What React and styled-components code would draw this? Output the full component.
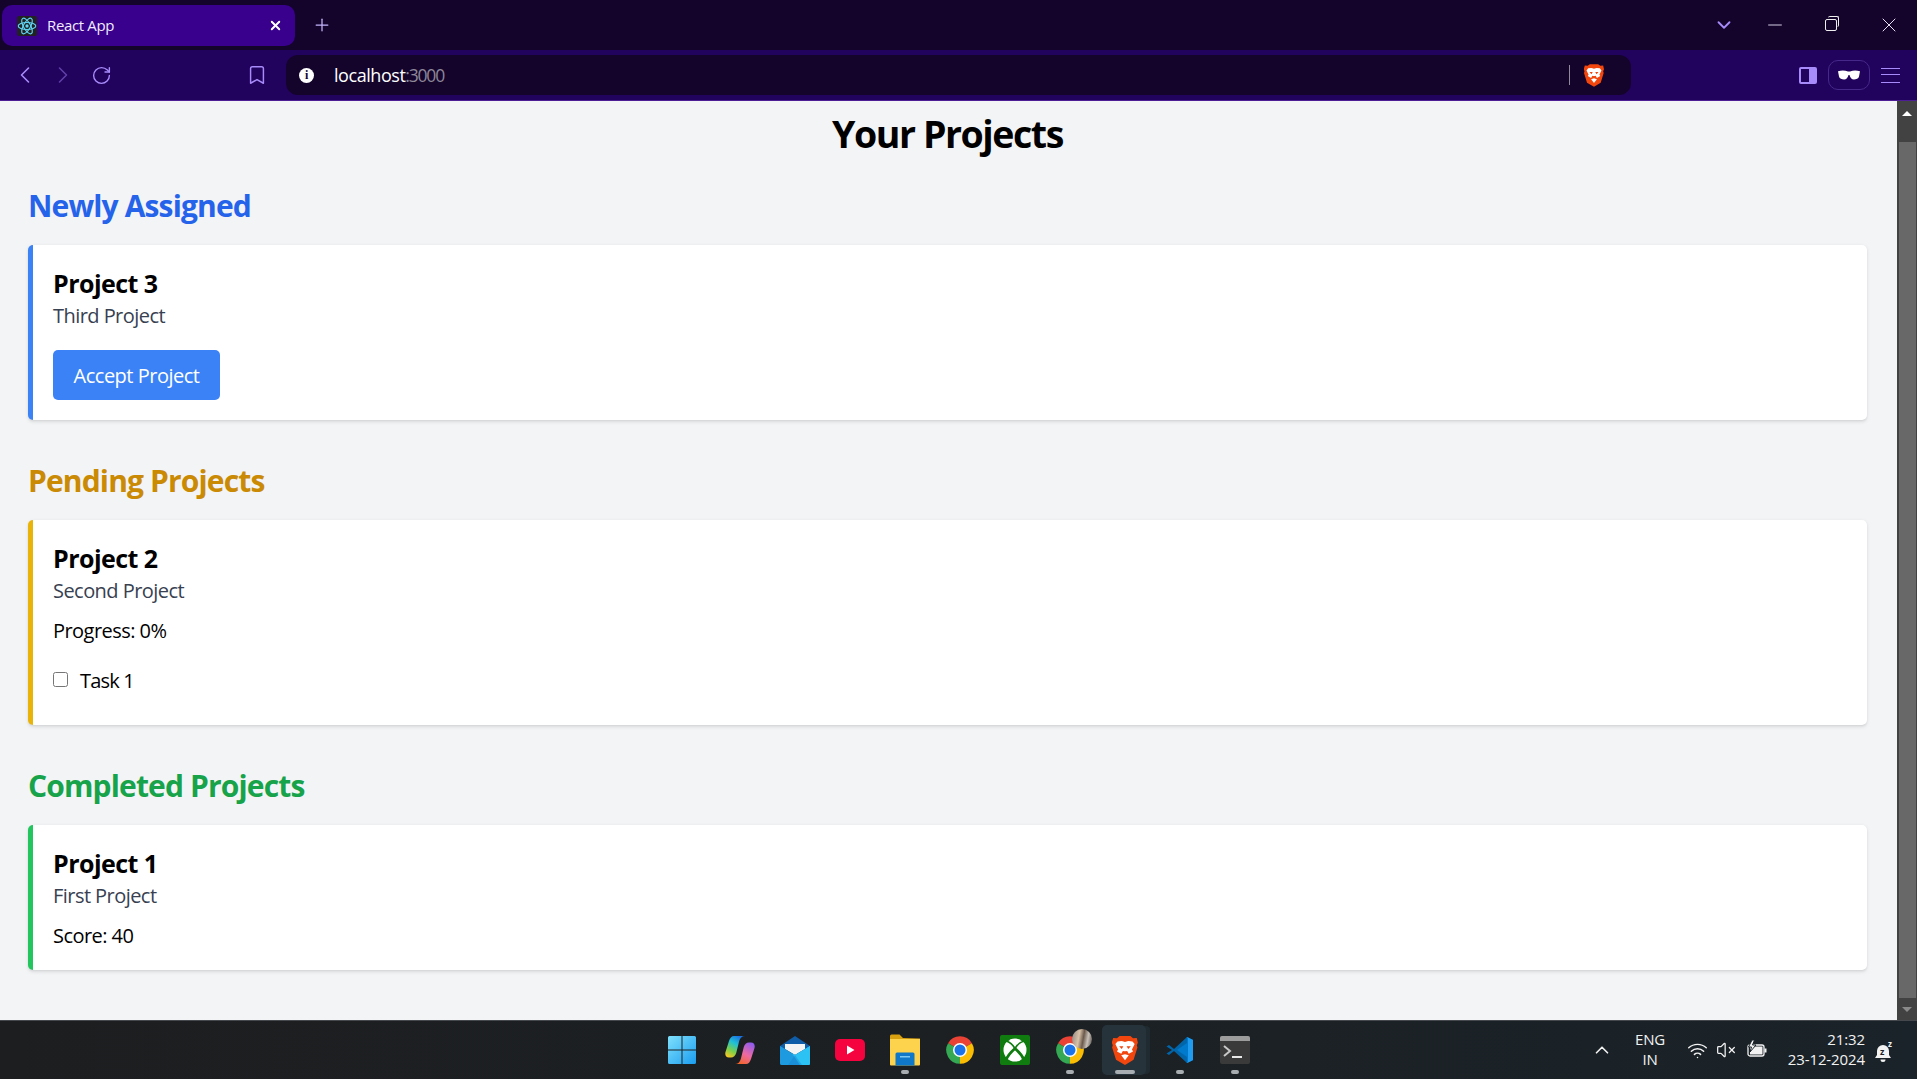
import React from "react";
import styled, { createGlobalStyle } from "styled-components";
import { ChevronLeft, ChevronRight, RotateCw, Bookmark, Plus, X, Minus, ChevronDown, ChevronUp, Wifi, VolumeX } from "lucide-react";

const uiFont = `"Open Sans", "Noto Sans", "Liberation Sans", sans-serif`;

const GlobalStyle = createGlobalStyle`
  html, body { margin: 0; padding: 0; height: 100%; overflow: hidden; }
  * { box-sizing: border-box; }
  body { font-family: ${uiFont}; background: #f3f4f6; }
`;

const Screen = styled.div`
  width: 100%;
  height: 100vh;
  display: flex;
  flex-direction: column;
  overflow: hidden;
`;

/* browser chrome */
const TabStrip = styled.div`
  height: 50px;
  flex: none;
  background: #14042b;
  display: flex;
  align-items: flex-start;
  padding: 5px 0 0 2px;
`;
const Tab = styled.div`
  width: 293px;
  height: 41px;
  background: #38008c;
  border-radius: 10px;
  display: flex;
  align-items: center;
  padding: 0 12px 0 15px;
  color: #f1eaff;
  font-size: 15px;
  letter-spacing: -0.35px;
`;
const Favicon = styled.span`
  width: 20px;
  height: 20px;
  background: #222;
  border-radius: 2px;
  display: flex;
  margin-right: 10px;
`;
const TabTitle = styled.span`
  flex: 1;
  line-height: 20px;
  padding-bottom: 2px;
`;
const StripButton = styled.span`
  width: ${p => p.$w || 40}px;
  height: 39px;
  margin-left: ${p => p.$ml || 0}px;
  display: flex;
  align-items: center;
  justify-content: center;
  color: ${p => p.$color || "#e6e0f5"};
`;
const Restore = styled.span`
  width: 12px;
  height: 12px;
  border: 1.2px solid #eee;
  border-radius: 2px;
  position: relative;
  background: #14042b;
  &::before {
    content: "";
    position: absolute;
    left: 2px;
    top: -4px;
    width: 10px;
    height: 10px;
    border-top: 1.2px solid #eee;
    border-right: 1.2px solid #eee;
    border-radius: 2px;
  }
`;
const Toolbar = styled.div`
  height: 51px;
  flex: none;
  background: #21025c;
  border-bottom: 1px solid #4c1d95;
  display: flex;
  align-items: center;
  padding-left: 6px;
`;
const NavButton = styled.span`
  width: 38px;
  height: 40px;
  margin-left: ${p => p.$ml || 0}px;
  display: flex;
  align-items: center;
  justify-content: center;
  color: ${p => (p.$dim ? "#5f3fa8" : "#a78bfa")};
`;
const UrlBar = styled.div`
  width: 1345px;
  height: 40px;
  margin-left: 10px;
  background: #14042b;
  border-radius: 12px;
  display: flex;
  align-items: center;
  padding-left: 13px;
  font-size: 18px;
  letter-spacing: -0.45px;
`;
const InfoDot = styled.span`
  width: 15px;
  height: 15px;
  border-radius: 50%;
  background: #fff;
  color: #14042b;
  font: bold 12px/15px "Liberation Serif", serif;
  text-align: center;
  margin-right: 20px;
`;
const Host = styled.span`
  color: #fff;
`;
const Port = styled.span`
  color: #8d8799;
  flex: 1;
  font-size: 17.5px;
  letter-spacing: -1.2px;
`;
const UrlDivider = styled.span`
  width: 1px;
  height: 20px;
  background: #8f8a9a;
  margin-right: 14px;
`;
const ShieldSlot = styled.span`
  display: flex;
  margin-right: 27px;
`;
const SidePanelIcon = styled.span`
  width: 18px;
  height: 17px;
  margin-left: 168px;
  border: 2px solid #a78bfa;
  border-radius: 2px;
  display: flex;
  justify-content: flex-end;
  &::after {
    content: "";
    width: 6px;
    background: #a78bfa;
  }
`;
const PrivatePill = styled.span`
  width: 42px;
  height: 30px;
  margin-left: 11px;
  border: 1px solid #45288a;
  border-radius: 10px;
  display: flex;
  align-items: center;
  justify-content: center;
`;
const Burger = styled.span`
  width: 19px;
  height: 15px;
  margin-left: 11px;
  border-top: 1.5px solid #a78bfa;
  border-bottom: 1.5px solid #a78bfa;
  position: relative;
  &::after {
    content: "";
    position: absolute;
    left: 0;
    right: 0;
    top: 5.25px;
    height: 1.5px;
    background: #a78bfa;
  }
`;

/* page */
const Viewport = styled.div`
  flex: 1;
  min-height: 0;
  display: flex;
`;
const Page = styled.main`
  flex: 1;
  background: #f3f4f6;
  padding: 10px 30px 0 28px;
  overflow: hidden;
`;
const Title = styled.h1`
  margin: 0 0 29px;
  text-align: center;
  font-size: 37.5px;
  line-height: 45px;
  font-weight: 700;
  letter-spacing: -1.45px;
  color: #000;
`;
const Section = styled.section`
  margin-bottom: 40px;
`;
const SectionTitle = styled.h2`
  margin: 0 0 20px;
  padding-top: 1px;
  font-size: 30px;
  line-height: 39px;
  font-weight: 700;
  letter-spacing: -0.85px;
  color: ${p => p.$color};
`;
const Card = styled.article`
  background: #fff;
  border-left: 5px solid ${p => p.$accent};
  border-radius: 5px;
  padding: 20px;
  box-shadow: 0 1.25px 3.75px rgba(0, 0, 0, 0.1), 0 1.25px 2.5px -1.25px rgba(0, 0, 0, 0.1);
`;
const CardTitle = styled.h3`
  margin: 0;
  padding-top: 2px;
  font-size: 25px;
  line-height: 33px;
  font-weight: 700;
  letter-spacing: -0.55px;
  color: #000;
`;
const CardText = styled.p`
  margin: ${p => p.$mt || 0}px 0 0;
  padding-top: 2px;
  font-size: 20px;
  line-height: 28px;
  letter-spacing: -0.55px;
  color: ${p => p.$color || "#000"};
`;
const AcceptButton = styled.button`
  display: block;
  margin-top: 20px;
  width: 167px;
  height: 50px;
  padding: 1px 0 0;
  border: none;
  border-radius: 5px;
  background: #3b82f6;
  color: #fff;
  font-family: ${uiFont};
  font-size: 20px;
  line-height: 30px;
  letter-spacing: -0.5px;
`;
const TaskList = styled.ul`
  list-style: none;
  margin: 20px 0 10px;
  padding: 0;
`;
const TaskRow = styled.li`
  display: flex;
  align-items: center;
  font-size: 20px;
  line-height: 28px;
  padding-top: 2px;
  letter-spacing: -0.8px;
  color: #000;
`;
const TaskBox = styled.input`
  width: 15px;
  height: 15px;
  margin: 0 12px 4px 0;
`;

/* scrollbar */
const ScrollTrack = styled.div`
  width: 20px;
  flex: none;
  background: #424242;
  display: flex;
  flex-direction: column;
`;
const ScrollArrow = styled.span`
  height: ${p => p.$h}px;
  padding-bottom: ${p => p.$pb || 0}px;
  flex: none;
  display: flex;
  justify-content: center;
  align-items: center;
  &::before {
    content: "";
    border-left: 5px solid transparent;
    border-right: 5px solid transparent;
    ${p => (p.$down ? "border-top: 5px solid #8a8a8a;" : "border-bottom: 5px solid #fff;")}
  }
`;
const ScrollThumb = styled.span`
  flex: 1;
  margin: 0 1px 0 2px;
  background: #686868;
`;

/* taskbar */
const Taskbar = styled.footer`
  height: 59px;
  flex: none;
  background: linear-gradient(90deg, #1d1e20 0%, #1c2023 50%, #1a2329 100%);
  border-top: 1px solid #45494d;
  display: flex;
  align-items: center;
  padding-left: 654.5px;
  color: #f2f2f2;
`;
const AppSlot = styled.span`
  width: 55px;
  height: 50px;
  flex: none;
  position: relative;
  isolation: isolate;
  display: flex;
  align-items: center;
  justify-content: center;
  &:first-child {
    margin-right: 2.5px;
  }
  &::before {
    content: "";
    display: ${p => (p.$active ? "block" : "none")};
    position: absolute;
    z-index: -1;
    top: 0;
    bottom: 0;
    left: 5px;
    right: 6px;
    border-radius: 5px;
    background: #26333b;
    box-shadow: 5px 0 0 -1px #202b31;
  }
  &::after {
    content: "";
    display: ${p => (p.$dot ? "block" : "none")};
    position: absolute;
    bottom: 1px;
    left: 50%;
    transform: translateX(-50%);
    width: ${p => (p.$active ? 20 : 8)}px;
    height: 4px;
    border-radius: 2px;
    background: #a7adb0;
  }
`;
const Avatar = styled.span`
  position: absolute;
  top: 4px;
  right: 5px;
  width: 20px;
  height: 20px;
  border-radius: 50%;
  background: linear-gradient(100deg, #8d8480 0%, #d8c2a8 35%, #6b5a4c 55%, #c9c1b8 75%, #4f4a48 100%);
`;
const Tray = styled.div`
  margin-left: auto;
  display: flex;
  align-items: center;
  padding-right: 20px;
`;
const TraySlot = styled.span`
  width: ${p => p.$w}px;
  margin-left: ${p => p.$ml || 0}px;
  display: flex;
  justify-content: center;
  align-items: center;
`;
const TrayText = styled.span`
  display: flex;
  flex-direction: column;
  align-items: ${p => p.$align || "center"};
  width: ${p => p.$w}px;
  margin-left: ${p => p.$ml || 0}px;
  padding-bottom: 2px;
  font-size: 15px;
  line-height: 20px;
  letter-spacing: ${p => p.$ls || "-0.2px"};
  white-space: nowrap;
`;

const ReactLogo = () => (
  <svg width="20" height="20" viewBox="0 0 24 24" fill="none" stroke="#5ed3f3" strokeWidth="1.4">
    <ellipse cx="12" cy="12" rx="10.5" ry="4.2" />
    <ellipse cx="12" cy="12" rx="10.5" ry="4.2" transform="rotate(60 12 12)" />
    <ellipse cx="12" cy="12" rx="10.5" ry="4.2" transform="rotate(120 12 12)" />
    <circle cx="12" cy="12" r="2" fill="#5ed3f3" stroke="none" />
  </svg>
);

const BraveLion = ({ w = 20, h = 24 }) => (
  <svg width={w} height={h} viewBox="0 0 24 28">
    <path fill="#f1470f" d="M7 1h10l2.5 2 3.5-.3 1 4.5-1 2.3.6 2.2-3.6 11.5L12 28l-8.4-4.800L0 11.700l.6-2.200-1-2.300L1 2.700 4.500 3z" />
    <path fill="#fff" d="M12 6.500l3-1 4 .5 2 2.500-2.500 5 1 1.800-4 2.200-1.500-2.500-2 .5-2-.5-1.500 2.500-4-2.200 1-1.800-2.500-5 2-2.500 4-.5zM8.500 19l3.500-1 3.500 1L12 23.500z" />
    <path fill="#f1470f" d="M6.500 10.500h4l-1.500 2.500zM13.500 10.500h4l-2.500 2.500zM10 15.500h4L12 17.500z" />
  </svg>
);

const Glasses = () => (
  <svg width="22" height="10" viewBox="0 0 22 10" fill="#fff">
    <path d="M0 1.200C4 .2 7 .4 10 1.500h2c3-1.100 6-1.300 10-.3l-1 5.300C20.500 8.800 18 9.500 16 9.500c-2.500 0-3.800-2-4.500-4.500h-1C9.800 7.500 8.500 9.500 6 9.500c-2 0-4.500-.7-5-3z" />
  </svg>
);

const WindowsLogo = () => (
  <svg width="30" height="30" viewBox="0 0 30 30">
    <defs>
      <linearGradient id="winA" x1="0" y1="0" x2="1" y2="1">
        <stop offset="0" stopColor="#7fe0fb" />
        <stop offset="1" stopColor="#1a9df0" />
      </linearGradient>
    </defs>
    <path fill="url(#winA)" d="M1 2.500A1.500 1.500 0 0 1 2.500 1H14.500V14.500H1zM15.500 1H27.500A1.500 1.500 0 0 1 29 2.500V14.500H15.500zM1 15.500H14.500V29H2.500A1.500 1.500 0 0 1 1 27.500zM15.500 15.500H29V27.500A1.500 1.500 0 0 1 27.500 29H15.500z" />
  </svg>
);

const CopilotLogo = () => (
  <svg width="30" height="30" viewBox="0 0 30 30">
    <defs>
      <linearGradient id="copA" x1="0.7" y1="0" x2="0.2" y2="1">
        <stop offset="0" stopColor="#1b6fe0" />
        <stop offset="0.35" stopColor="#1fc0d8" />
        <stop offset="0.7" stopColor="#7ad04a" />
        <stop offset="1" stopColor="#f7c623" />
      </linearGradient>
      <linearGradient id="copB" x1="0.7" y1="0" x2="0.2" y2="1">
        <stop offset="0" stopColor="#f2662b" />
        <stop offset="0.45" stopColor="#ee6aa0" />
        <stop offset="1" stopColor="#8d5bf0" />
      </linearGradient>
    </defs>
    <path fill="url(#copA)" d="M9 1h11c-3 0-5 2-5.800 5l-3 12c-.7 2.700-2.700 4.500-5.200 4.500H4C1 22.500-.3 20 .5 17L4 6c1-3 2.500-5 5-5z" />
    <path fill="url(#copB)" transform="rotate(180 15 15)" d="M9 1h11c-3 0-5 2-5.800 5l-3 12c-.7 2.700-2.700 4.500-5.200 4.500H4C1 22.500-.3 20 .5 17L4 6c1-3 2.500-5 5-5z" />
  </svg>
);

const MailLogo = () => (
  <svg width="30" height="30" viewBox="0 0 30 30">
    <path fill="#0f5ca8" d="M0 11L15 1l15 10v4H0z" />
    <path fill="#f4f4f4" d="M5 9h20v5L15 20 5 14z" />
    <path fill="#1e9be0" d="M0 11l15 9 15-9v17.500a1.500 1.500 0 0 1-1.500 1.500h-27A1.500 1.500 0 0 1 0 28.500z" />
    <path fill="#2cc2f4" d="M30 11v17.500a1.500 1.500 0 0 1-1.500 1.500H20L12 18.200l3 1.800z" />
    <path fill="#1478c8" d="M15 20l7 10H8z" opacity="0.35" />
  </svg>
);

const YoutubeLogo = () => (
  <svg width="30" height="22" viewBox="0 0 30 22">
    <rect width="30" height="22" rx="5" fill="#f5033f" />
    <path fill="#fff" d="M12 6.500l7.500 4.500-7.500 4.500z" />
  </svg>
);

const FolderLogo = () => (
  <svg width="30" height="32" viewBox="0 0 30 32">
    <path fill="#d9a00f" d="M0 2a1.500 1.500 0 0 1 1.500-1.500h8L13 4l17 .5V8H0z" />
    <path fill="#fdd34d" d="M0 5h30v25.500a1 1 0 0 1-1 1H1a1 1 0 0 1-1-1z" />
    <path fill="#0f78c9" d="M5.500 20a1.500 1.500 0 0 1 1.500-1.500h16a1.500 1.500 0 0 1 1.500 1.500v11.500h-19z" />
    <path fill="#7cc8f5" d="M10 22h10v1.500H10z" />
  </svg>
);

const ChromeLogo = () => (
  <svg width="30" height="30" viewBox="0 0 24 24">
    <path fill="#ea4335" d="M12 12L2.470 6.500A11 11 0 0 1 21.530 6.500z" />
    <path fill="#fbbc04" d="M12 12L21.530 6.500A11 11 0 0 1 12 23z" />
    <path fill="#34a853" d="M12 12L12 23A11 11 0 0 1 2.470 6.500z" />
    <circle cx="12" cy="12" r="5.600" fill="#fff" />
    <circle cx="12" cy="12" r="4.400" fill="#1a73e8" />
  </svg>
);

const XboxLogo = () => (
  <svg width="30" height="30" viewBox="0 0 30 30">
    <rect width="30" height="30" rx="2" fill="#107c10" />
    <circle cx="15" cy="15" r="11.500" fill="#fff" />
    <g fill="none" stroke="#107c10" strokeLinecap="round">
      <path strokeWidth="1.800" d="M6 6C10 7 13 10 15 13.500C17 10 20 7 24 6" />
      <path strokeWidth="2.800" d="M15 13.500C11 17 7.500 21 6 25M15 13.500C19 17 22.500 21 24 25" />
    </g>
    <path fill="#107c10" d="M3 8L10 5 3 3zM27 8l-7-3 7-2zM2 22l4 3 2 3H2zM28 22l-4 3-2 3h6z" />
  </svg>
);

const VscodeLogo = () => (
  <svg width="30" height="30" viewBox="0 0 30 30">
    <path fill="#0065a9" d="M28 5L22 2 9 14 4 10 1.500 11.500 7 15 1.500 18.500 4 20l5-4 13 12 6-3z" />
    <path fill="#007acc" d="M22 2l6 3v20l-6 3V8L12 15l10 7z" />
    <path fill="#1f9cf0" d="M21 2.500L22 2l6 3v20l-6 3-1-.5c1 .5 2 0 2-1V3.500c0-1-1-1.500-2-1z" />
  </svg>
);

const TerminalLogo = () => (
  <svg width="30" height="28" viewBox="0 0 30 28">
    <rect width="30" height="28" rx="2" fill="#3a3a3a" />
    <path fill="#9c9c9c" d="M2 0h26a2 2 0 0 1 2 2v3H0V2a2 2 0 0 1 2-2z" />
    <path fill="none" stroke="#c8c8c8" strokeWidth="2" d="M4 10l6 5-6 5" />
    <path fill="#e8e8e8" d="M12 20h10v2H12z" />
  </svg>
);

const BatteryIcon = () => (
  <svg width="21" height="20" viewBox="0 0 21 20" fill="none" stroke="#f2f2f2" strokeWidth="1.300">
    <rect x="1" y="5" width="16" height="11" rx="2" />
    <path d="M18.500 8.500v4" strokeWidth="2" />
    <path fill="#f2f2f2" stroke="none" d="M3 6.500h12.500v8H3z" />
    <path fill="#f2f2f2" stroke="#1a2329" strokeWidth="1" d="M5 0L1.500 7H4.500L3 12l6-7H5.500L7.500 0z" />
  </svg>
);

const SnoozeBell = () => (
  <svg width="20" height="24" viewBox="0 -4 20 24">
    <path fill="#f2f2f2" d="M8 3a6 6 0 0 1 6 6v4l2 3H0l2-3V9a6 6 0 0 1 6-6zM5.500 17.500h5a2.500 2.500 0 0 1-5 0z" />
    <text x="5" y="13" fontSize="9" fontWeight="700" fill="#1a2329" fontFamily="Open Sans, sans-serif">z</text>
    <text x="13" y="5" fontSize="8" fontWeight="700" fill="#f2f2f2" fontFamily="Open Sans, sans-serif">z</text>
  </svg>
);

const projects = [
  {
    heading: "Newly Assigned",
    color: "#2563eb",
    accent: "#3b82f6",
    name: "Project 3",
    about: "Third Project",
    body: <AcceptButton>Accept Project</AcceptButton>,
  },
  {
    heading: "Pending Projects",
    color: "#ca8a04",
    accent: "#eab308",
    name: "Project 2",
    about: "Second Project",
    body: (
      <>
        <CardText $mt={10}>Progress: 0%</CardText>
        <TaskList>
          <TaskRow>
            <TaskBox type="checkbox" />
            Task 1
          </TaskRow>
        </TaskList>
      </>
    ),
  },
  {
    heading: "Completed Projects",
    color: "#16a34a",
    accent: "#22c55e",
    name: "Project 1",
    about: "First Project",
    body: <CardText $mt={10}>Score: 40</CardText>,
  },
];

const apps = [
  { icon: <WindowsLogo /> },
  { icon: <CopilotLogo /> },
  { icon: <MailLogo /> },
  { icon: <YoutubeLogo /> },
  { icon: <FolderLogo />, dot: true },
  { icon: <ChromeLogo /> },
  { icon: <XboxLogo /> },
  { icon: <ChromeLogo />, dot: true, avatar: true },
  { icon: <BraveLion w={26} h={30} />, dot: true, active: true },
  { icon: <VscodeLogo />, dot: true },
  { icon: <TerminalLogo />, dot: true },
];

export default function App() {
  return (
    <Screen>
      <GlobalStyle />
      <TabStrip>
        <Tab>
          <Favicon><ReactLogo /></Favicon>
          <TabTitle>React App</TabTitle>
          <X size={15} strokeWidth={3} color="#fff" />
        </Tab>
        <StripButton $w={54}><Plus size={20} strokeWidth={1.5} color="#c4b5fd" /></StripButton>
        <StripButton $w={40} $ml={1355} $color="#a78bfa"><ChevronDown size={22} strokeWidth={2} /></StripButton>
        <StripButton $w={40} $ml={11}><Minus size={22} strokeWidth={1} /></StripButton>
        <StripButton $w={40} $ml={16}><Restore /></StripButton>
        <StripButton $w={40} $ml={18}><X size={24} strokeWidth={1} /></StripButton>
      </TabStrip>
      <Toolbar>
        <NavButton><ChevronLeft size={28} strokeWidth={1.4} /></NavButton>
        <NavButton $dim><ChevronRight size={28} strokeWidth={1.4} /></NavButton>
        <NavButton><RotateCw size={21} strokeWidth={1.6} /></NavButton>
        <NavButton $ml={118}><Bookmark size={22} strokeWidth={1.6} /></NavButton>
        <UrlBar>
          <InfoDot>i</InfoDot>
          <Host>localhost</Host>
          <Port>:3000</Port>
          <UrlDivider />
          <ShieldSlot><BraveLion /></ShieldSlot>
        </UrlBar>
        <SidePanelIcon />
        <PrivatePill><Glasses /></PrivatePill>
        <Burger />
      </Toolbar>
      <Viewport>
        <Page>
          <Title>Your Projects</Title>
          {projects.map(p => (
            <Section key={p.name}>
              <SectionTitle $color={p.color}>{p.heading}</SectionTitle>
              <Card $accent={p.accent}>
                <CardTitle>{p.name}</CardTitle>
                <CardText $color="#374151">{p.about}</CardText>
                {p.body}
              </Card>
            </Section>
          ))}
        </Page>
        <ScrollTrack>
          <ScrollArrow $h={41} $pb={17} />
          <ScrollThumb />
          <ScrollArrow $h={22} $down />
        </ScrollTrack>
      </Viewport>
      <Taskbar>
        {apps.map((a, i) => (
          <AppSlot key={i} $dot={a.dot} $active={a.active}>
            {a.icon}
            {a.avatar && <Avatar />}
          </AppSlot>
        ))}
        <Tray>
          <TraySlot $w={24}><ChevronUp size={22} strokeWidth={1.8} /></TraySlot>
          <TrayText $w={40} $ml={16}><span>ENG</span><span>IN</span></TrayText>
          <TraySlot $w={24} $ml={15}><Wifi size={21} strokeWidth={1.7} /></TraySlot>
          <TraySlot $w={24} $ml={5}><VolumeX size={20} strokeWidth={1.5} /></TraySlot>
          <TraySlot $w={24} $ml={7}><BatteryIcon /></TraySlot>
          <TrayText $w={80} $ml={16} $align="flex-end" $ls="-0.1px"><span>21:32</span><span>23-12-2024</span></TrayText>
          <TraySlot $w={24} $ml={8}><SnoozeBell /></TraySlot>
        </Tray>
      </Taskbar>
    </Screen>
  );
}
